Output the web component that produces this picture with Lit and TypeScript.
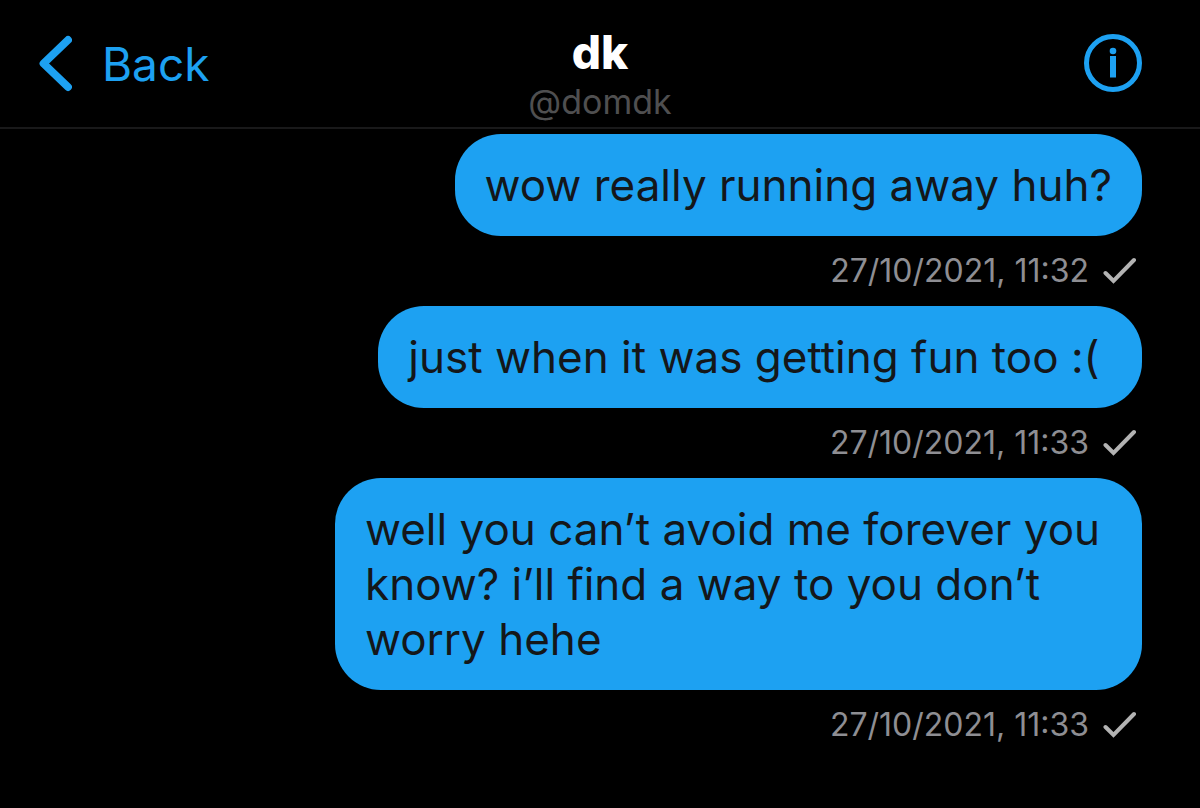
import { LitElement, html, css } from "lit";
import { customElement } from "lit/decorators.js";

interface Message {
  text: string;
  time: string;
}

const messages: Message[] = [
  { text: "wow really running away huh?", time: "27/10/2021, 11:32" },
  { text: "just when it was getting fun too :(\u00a0", time: "27/10/2021, 11:33" },
  { text: "well you can’t avoid me forever you know? i’ll find a way to you don’t worry hehe", time: "27/10/2021, 11:33" },
];

@customElement("app-root")
export class AppRoot extends LitElement {
  static styles = css`
    :host {
      display: block;
      box-sizing: border-box;
      min-height: 100vh;
      background: #000;
      font-family: Inter, "Liberation Sans", sans-serif;
    }
    .header {
      display: grid;
      grid-template-columns: 1fr auto 1fr;
      align-items: start;
      padding: 0 38px;
      border-bottom: 2px solid #19191a;
    }
    .back {
      display: flex;
      align-items: center;
      justify-self: start;
      gap: 30px;
      margin: 34px 0 0;
      padding: 0;
      border: 0;
      background: none;
      color: #1da1f2;
      font: 400 46px/60px Inter, "Liberation Sans", sans-serif;
    }
    .info {
      justify-self: end;
      margin: 34px 20px 0 0;
      padding: 0;
      border: 0;
      background: none;
      color: #1da1f2;
    }
    svg {
      display: block;
    }
    .person {
      padding: 24px 0 3px;
      text-align: center;
    }
    .name {
      margin: 0;
      color: #fff;
      font-size: 46px;
      line-height: 56px;
      font-weight: 800;
    }
    .handle {
      margin: 0;
      color: #4f4f50;
      font-size: 34px;
      line-height: 44px;
    }
    .thread {
      display: flex;
      flex-direction: column;
      margin: 0;
      padding: 5px 58px 0;
      list-style: none;
    }
    .message {
      display: flex;
      flex-direction: column;
      align-items: flex-end;
    }
    .bubble {
      box-sizing: border-box;
      max-width: 807px;
      margin: 0;
      padding: 24px 30px 23px;
      border-radius: 46px;
      background: #1da1f2;
      color: #14171a;
      font-size: 44px;
      line-height: 55px;
    }
    .meta {
      display: flex;
      align-items: center;
      gap: 14px;
      height: 68px;
      padding: 0 5px 2px 0;
      color: #8e8e93;
      font-size: 32px;
    }
  `;

  render() {
    return html`
      <header class="header">
        <button class="back" type="button">
          <svg width="34" height="60" viewBox="0 0 34 60" fill="none" aria-hidden="true">
            <path d="M30 6 5.500 29.500 30 53" stroke="currentColor" stroke-width="7.8" stroke-linecap="round" stroke-linejoin="round" />
          </svg>
          <span>Back</span>
        </button>
        <div class="person">
          <h1 class="name">dk</h1>
          <p class="handle">@domdk</p>
        </div>
        <button class="info" type="button" aria-label="Conversation info">
          <svg width="58" height="58" viewBox="0 0 58 58" fill="none" aria-hidden="true">
            <circle cx="29" cy="29" r="26.500" stroke="currentColor" stroke-width="5" />
            <circle cx="29" cy="17" r="3.3" fill="currentColor" />
            <path d="M29 22v21.500" stroke="currentColor" stroke-width="6" />
          </svg>
        </button>
      </header>
      <ul class="thread">
        ${messages.map(
          (m) => html`
            <li class="message">
              <p class="bubble">${m.text}</p>
              <div class="meta">
                <time>${m.time}</time>
                <svg width="34" height="28" viewBox="0 0 34 28" fill="none" aria-label="Sent" role="img">
                  <path d="M2.500 17 10.500 25 31 4" stroke="#b3b3b3" stroke-width="4" stroke-linecap="round" />
                </svg>
              </div>
            </li>
          `
        )}
      </ul>
    `;
  }
}
